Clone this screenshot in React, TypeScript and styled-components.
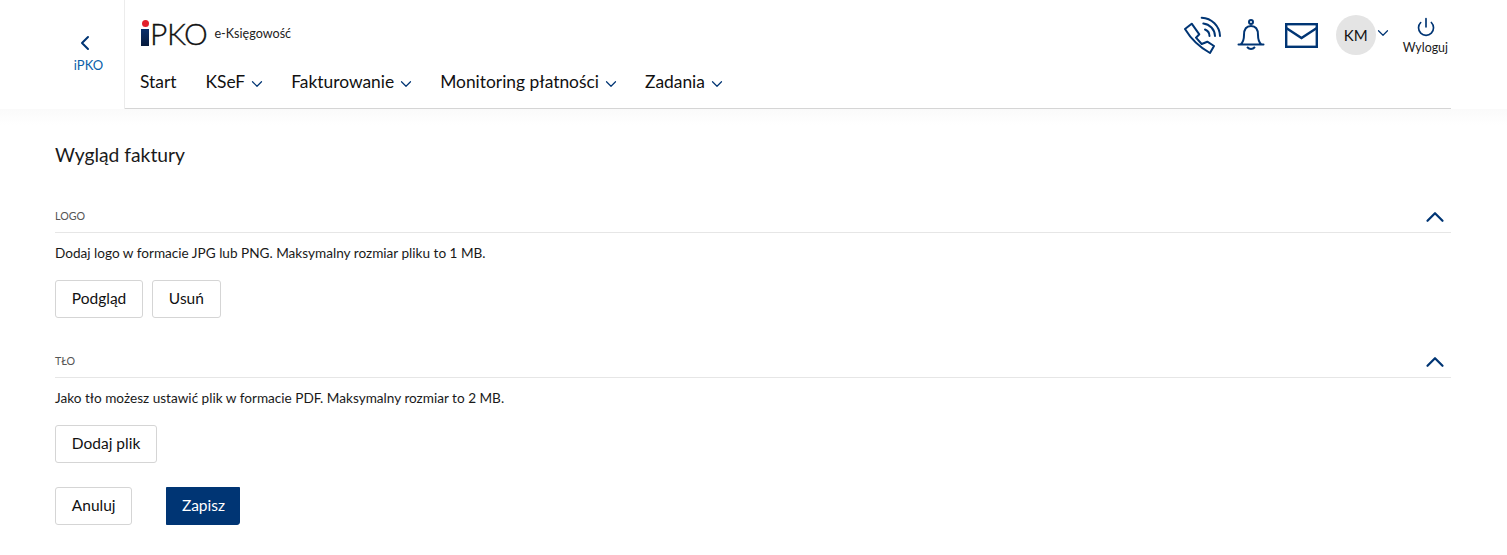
import React from 'react';
import styled, { createGlobalStyle } from 'styled-components';
import { ChevronDown, ChevronLeft, ChevronUp, Power } from 'lucide-react';

const NAVY = '#003574';

const GlobalStyle = createGlobalStyle`
  html, body { margin: 0; padding: 0; background: #fff; }
  body { font-family: Lato, "Noto Sans", sans-serif; color: #1a1a1a; }
`;

const Header = styled.header`
  display: flex;
  height: 109px;
  background: #fff;
  padding-right: 56px;
`;

const BackColumn = styled.a`
  width: 125px;
  flex: none;
  box-sizing: border-box;
  padding: 31px 0 0 53px;
  display: flex;
  flex-direction: column;
  align-items: center;
  border-right: 1px solid #ececec;
  color: #0a5ea8;
  font-size: 13px;
  line-height: 18px;
  svg { color: ${NAVY}; margin: 0 8px 1px 0; }
`;

const HeaderMain = styled.div`
  flex: 1;
  display: flex;
  justify-content: space-between;
  border-bottom: 1px solid #d5d5d5;
  padding: 0 3px 0 15px;
`;

const Brand = styled.div`
  display: flex;
  align-items: center;
  height: 26px;
  margin: 20px 0 0 1px;
`;

const LogoDot = styled.span`
  display: block;
  width: 7px;
  height: 7px;
  border-radius: 50%;
  background: #e2202c;
  margin: 0 0 2px 1px;
`;

const LogoStem = styled.span`
  display: block;
  width: 8px;
  height: 17px;
  background: linear-gradient(#0a2f6b, #061a3c);
`;

const LogoMark = styled.span`
  display: flex;
  flex-direction: column;
`;

const LogoWord = styled.span`
  font-family: Lato, sans-serif;
  font-weight: 300;
  font-size: 30px;
  line-height: 26px;
  letter-spacing: -0.4px;
  -webkit-text-stroke: 0.35px #111;
  color: #111;
  margin-left: 1px;
`;

const BrandSuffix = styled.span`
  font-size: 12.6px;
  margin: 0 0 0 7px;
  color: #222;
`;

const Nav = styled.nav`
  display: flex;
  gap: 29px;
  margin-top: 24px;
`;

const NavItem = styled.a`
  display: flex;
  align-items: center;
  gap: 6px;
  font-size: 17.4px;
  line-height: 24px;
  color: #111;
  svg { color: ${NAVY}; margin: 3px -4px 0 -3px; }
`;

const Tools = styled.div`
  display: flex;
  align-items: flex-start;
  padding-top: 15px;
`;

const ToolIcon = styled.svg<{ $top: number; $gap: number }>`
  display: block;
  margin: ${p => p.$top}px ${p => p.$gap}px 0 0;
  color: ${NAVY};
`;

const Avatar = styled.span`
  width: 40px;
  height: 40px;
  border-radius: 50%;
  background: #e4e4e4;
  font-size: 15px;
  color: #111;
  display: flex;
  align-items: center;
  justify-content: center;
`;

const AvatarChevron = styled(ChevronDown)`
  color: ${NAVY};
  margin: 9px 0 0 -2px;
`;

const Logout = styled.a`
  display: flex;
  flex-direction: column;
  align-items: center;
  margin: 2px 0 0 11px;
  font-size: 12.4px;
  line-height: 16px;
  svg { color: ${NAVY}; margin: 0 0 3px 1px; }
`;

const Shade = styled.div`
  height: 16px;
  background: linear-gradient(#fafafa, #fff);
`;

const Page = styled.main`
  padding: 16px 56px 0 55px;
`;

const Title = styled.h1`
  margin: 0 0 30px;
  font-size: 19.3px;
  font-weight: 400;
  line-height: 28px;
`;

const Section = styled.section<{ $bottom: number }>`
  margin-bottom: ${p => p.$bottom}px;
`;

const SectionHead = styled.div`
  display: flex;
  justify-content: space-between;
  align-items: center;
  height: 33px;
  border-bottom: 1px solid #e6e6e6;
  font-size: 10.7px;
  color: #555;
  text-transform: uppercase;
  svg { color: ${NAVY}; margin: 2px 1px 0 0; }
`;

const Hint = styled.p`
  margin: 10px 0 0;
  font-size: 13.6px;
  line-height: 20px;
`;

const Row = styled.div<{ $gap: number }>`
  display: flex;
  gap: ${p => p.$gap}px;
  margin-top: 17px;
`;

const Button = styled.button<{ $primary?: boolean }>`
  height: 38px;
  box-sizing: border-box;
  padding: 0 ${p => (p.$primary ? 14.5 : 15.8)}px 2px;
  font: inherit;
  font-size: 15.5px;
  border-radius: ${p => (p.$primary ? '0 0 3px 0' : '3px')};
  border: 1px solid ${p => (p.$primary ? NAVY : '#d5d5d5')};
  background: ${p => (p.$primary ? NAVY : '#fff')};
  color: ${p => (p.$primary ? '#fff' : '#111')};
`;

const navItems = ['KSeF', 'Fakturowanie', 'Monitoring płatności', 'Zadania'];

export default function App() {
  return (
    <>
      <GlobalStyle />
      <Header>
        <BackColumn>
          <ChevronLeft size={24} strokeWidth={2} />
          iPKO
        </BackColumn>
        <HeaderMain>
          <div>
            <Brand>
              <LogoMark>
                <LogoDot />
                <LogoStem />
              </LogoMark>
              <LogoWord>PKO</LogoWord>
              <BrandSuffix>e-Księgowość</BrandSuffix>
            </Brand>
            <Nav>
              <NavItem>Start</NavItem>
              {navItems.map(item => (
                <NavItem key={item}>
                  {item}
                  <ChevronDown size={18} strokeWidth={1.6} />
                </NavItem>
              ))}
            </Nav>
          </div>
          <Tools>
            <ToolIcon $top={1} $gap={15} width="38" height="38" viewBox="0 0 38 38" fill="none" stroke="currentColor" strokeWidth="2">
              <path d="M1 13 L7.7 7.7 L15.3 18.3 L12 21.7 L17.7 28 L23.3 25.7 L30 30 L26 37 Q10 28 1 13 Z" strokeLinejoin="round" />
              <path d="M17.7 1.7 A19 19 0 0 1 36 20 M19.3 7.5 A13 13 0 0 1 31 20 M21 13.5 A7 7 0 0 1 25.5 20" strokeLinecap="round" />
            </ToolIcon>
            <ToolIcon $top={3} $gap={20} width="28" height="34" viewBox="0 0 28 34" fill="none" stroke="currentColor" strokeWidth="2">
              <circle cx="14" cy="4" r="2" />
              <path d="M1.5 26.5 H26.5 M3.5 26.5 Q7 24 7 17 Q7 8 14 8 Q21 8 21 17 Q21 24 24.5 26.5" strokeLinecap="round" />
              <path d="M10 29 Q14 33 18 29" />
            </ToolIcon>
            <ToolIcon $top={8} $gap={18} width="33" height="25" viewBox="0 0 33 25" fill="none" stroke="currentColor" strokeWidth="2.4">
              <rect x="1.2" y="1.2" width="30.6" height="22.6" />
              <path d="M1.2 5 L16.5 15 L31.8 5" />
            </ToolIcon>
            <Avatar>KM</Avatar>
            <AvatarChevron size={18} strokeWidth={1.6} />
            <Logout>
              <Power size={20} strokeWidth={2} />
              Wyloguj
            </Logout>
          </Tools>
        </HeaderMain>
      </Header>
      <Shade />
      <Page>
        <Title>Wygląd faktury</Title>
        <Section $bottom={26}>
          <SectionHead>
            Logo
            <ChevronUp size={30} strokeWidth={1.8} />
          </SectionHead>
          <Hint>Dodaj logo w formacie JPG lub PNG. Maksymalny rozmiar pliku to 1 MB.</Hint>
          <Row $gap={9}>
            <Button>Podgląd</Button>
            <Button>Usuń</Button>
          </Row>
        </Section>
        <Section $bottom={24}>
          <SectionHead>
            Tło
            <ChevronUp size={30} strokeWidth={1.8} />
          </SectionHead>
          <Hint>Jako tło możesz ustawić plik w formacie PDF. Maksymalny rozmiar to 2 MB.</Hint>
          <Row $gap={9}>
            <Button>Dodaj plik</Button>
          </Row>
        </Section>
        <Row $gap={34}>
          <Button>Anuluj</Button>
          <Button $primary>Zapisz</Button>
        </Row>
      </Page>
    </>
  );
}
